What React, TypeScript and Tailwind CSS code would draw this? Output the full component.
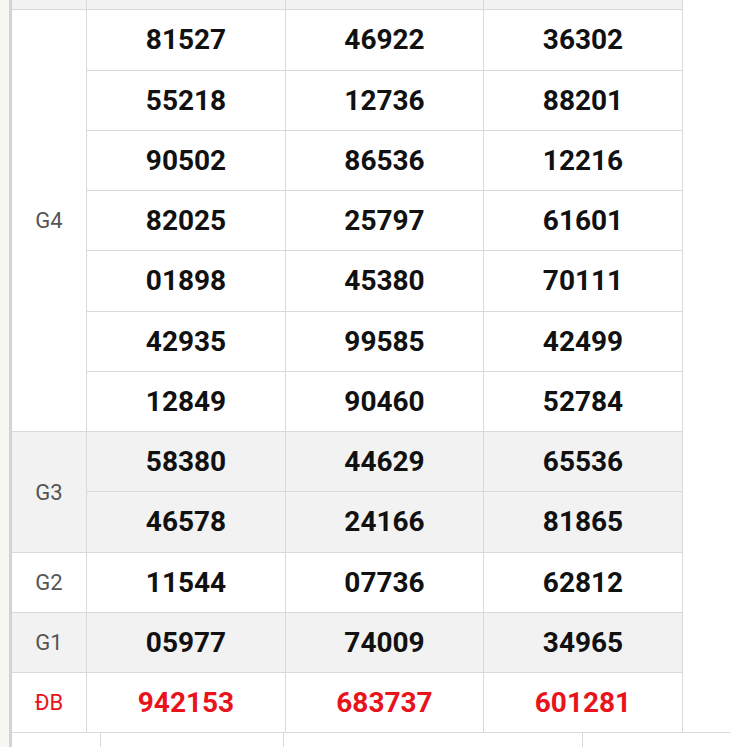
import React from 'react';

type Group = {
  label: string;
  rows: string[][];
  shaded: boolean;
  red?: boolean;
};

const groups: Group[] = [
  {
    label: 'G4',
    shaded: false,
    rows: [
      ['81527', '46922', '36302'],
      ['55218', '12736', '88201'],
      ['90502', '86536', '12216'],
      ['82025', '25797', '61601'],
      ['01898', '45380', '70111'],
      ['42935', '99585', '42499'],
      ['12849', '90460', '52784'],
    ],
  },
  {
    label: 'G3',
    shaded: true,
    rows: [
      ['58380', '44629', '65536'],
      ['46578', '24166', '81865'],
    ],
  },
  { label: 'G2', shaded: false, rows: [['11544', '07736', '62812']] },
  { label: 'G1', shaded: true, rows: [['05977', '74009', '34965']] },
  { label: 'ĐB', shaded: false, red: true, rows: [['942153', '683737', '601281']] },
];

// row heights incl. bottom border, matching the screenshot's grid lines
const heights = [
  'h-[61px]', 'h-[60px]', 'h-[60px]', 'h-[60px]', 'h-[61px]', 'h-[60px]',
  'h-[60px]', 'h-[60px]', 'h-[61px]', 'h-[60px]', 'h-[60px]', 'h-[60px]',
];

const colWidths = ['w-[199px]', 'w-[198px]', 'w-[199px]'];

export default function App() {
  let rowIndex = 0;

  return (
    <div
      className="w-[730px] h-[747px] overflow-hidden bg-white flex"
      style={{ fontFamily: 'Roboto, "Liberation Sans", sans-serif' }}
    >
      <div className="w-[9px] shrink-0 bg-[#f8f7f3]" />
      <div className="flex-1 border-l-[3px] border-[#d3d3d3]">
        {/* tail of the previous prize row */}
        <div className="flex h-[10px] w-[671px] bg-[#f2f2f2]">
          <div className="w-[75px] border-r border-b border-[#d9d9d9]" />
          {colWidths.map((w, i) => (
            <div key={i} className={`${w} border-r border-b border-[#d9d9d9]`} />
          ))}
        </div>

        {groups.map((g) => (
          <div key={g.label} className={`flex w-[671px] ${g.shaded ? 'bg-[#f2f2f2]' : 'bg-white'}`}>
            <div
              className={`w-[75px] shrink-0 flex items-center justify-center border-r border-b border-[#d9d9d9] text-[22px] ${
                g.red ? 'text-[#e8131b]' : 'text-[#555]'
              }`}
            >
              {g.label}
            </div>
            <div className="flex flex-col">
              {g.rows.map((r) => {
                const h = heights[rowIndex++];
                return (
                  <div key={r[0]} className={`flex ${h}`}>
                    {r.map((n, i) => (
                      <div
                        key={i}
                        className={`${colWidths[i]} flex items-center justify-center border-r border-b border-[#d9d9d9] text-[28px] font-bold ${
                          g.red ? 'text-[#e8131b]' : 'text-[#111]'
                        }`}
                      >
                        {n}
                      </div>
                    ))}
                  </div>
                );
              })}
            </div>
          </div>
        ))}

        {/* start of the next table */}
        <div className="-mt-px flex h-[40px] border-t border-[#d9d9d9]">
          <div className="w-[89px] border-r border-[#d9d9d9]" />
          <div className="w-[183px] border-r border-[#d9d9d9]" />
          <div className="w-[299px] border-r border-[#d9d9d9]" />
          <div className="flex-1" />
        </div>
      </div>
    </div>
  );
}
